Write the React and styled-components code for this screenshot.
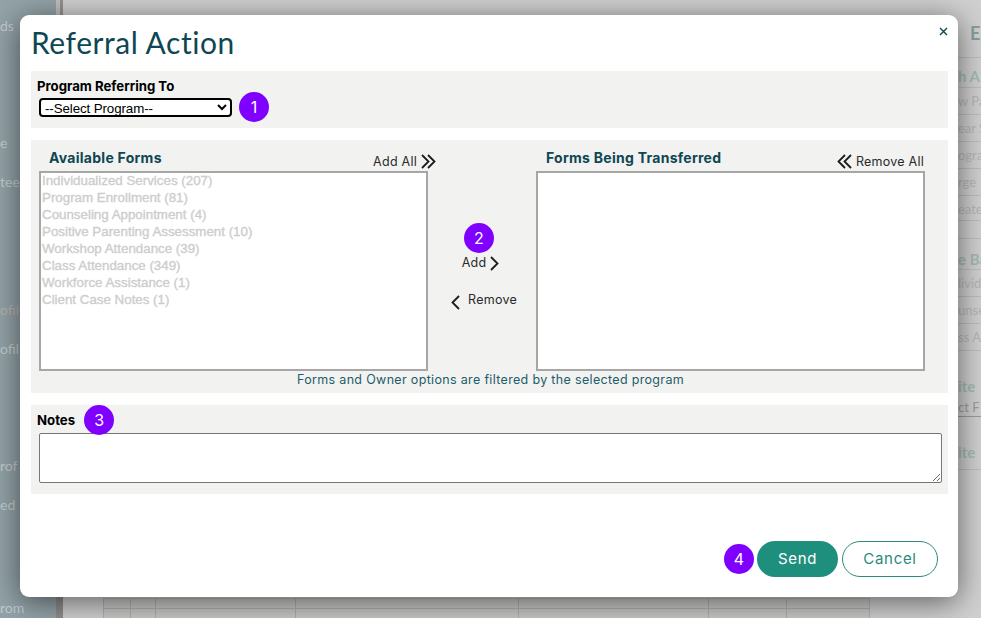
import React from "react";
import styled, { createGlobalStyle } from "styled-components";

const GlobalStyle = createGlobalStyle`
  html, body {
    margin: 0;
    padding: 0;
    height: 100%;
    overflow: hidden;
    background: #c8c8c8;
  }
  #root {
    height: 100%;
  }
`;

const Page = styled.div`
  position: relative;
  display: flex;
  width: 981px;
  height: 618px;
  overflow: hidden;
  background: #d0d0d0;
  font-family: Inter, "Liberation Sans", sans-serif;
`;

const Sidebar = styled.nav`
  width: 56px;
  height: 618px;
  flex-shrink: 0;
  overflow: hidden;
  background: #93a3a8;
`;

const SideItem = styled.div`
  margin-top: ${(p) => p.$top}px;
  height: 18px;
  font: 14px/18px Lato, sans-serif;
  color: ${(p) => p.$color || "#c4cdd0"};
  white-space: nowrap;
`;

const Rail = styled.div`
  width: 4px;
  height: 618px;
  flex-shrink: 0;
  background: linear-gradient(#c0c0c0 0 50%, #8e8e8e 50%);
`;

const RailEdge = styled.div`
  width: 3px;
  height: 618px;
  flex-shrink: 0;
  background: linear-gradient(#929292 0 50%, #8e8e8e 50%);
`;

const Main = styled.main`
  flex: 1;
  display: flex;
  flex-direction: column;
  justify-content: flex-end;
  min-width: 0;
`;

const BackTable = styled.div`
  margin: 0 88px 0 40px;
  height: 19px;
  display: grid;
  grid-template-columns: 27px 25px 140px 223px 190px 78px 1fr;
  grid-auto-rows: 10px;
  border-top: 1px solid #b4b4b4;
  border-right: 1px solid #b4b4b4;
  background: #c8cac7;
`;

const BackCell = styled.div`
  border-left: 1px solid #b0b0b0;
  border-bottom: 1px solid #b0b0b0;
`;

const BackColumn = styled.aside`
  width: 23px;
  flex-shrink: 0;
  overflow: hidden;
  display: flex;
  flex-direction: column;
`;

const BackHeading = styled.div`
  height: ${(p) => p.$height}px;
  flex-shrink: 0;
  font: 700 ${(p) => p.$size || 15}px/18px Lato, sans-serif;
  color: ${(p) => p.$color || "#a3bbb1"};
  padding: ${(p) => p.$pad || 0}px 0 0 ${(p) => p.$indent || 0}px;
  box-sizing: border-box;
  border-top: ${(p) => (p.$line ? "1px solid #bdbdbd" : "0")};
  border-bottom: ${(p) => (p.$under ? "1px solid #bdbdbd" : "0")};
  white-space: nowrap;
`;

const BackRow = styled.div`
  height: ${(p) => p.$height || 27}px;
  flex-shrink: 0;
  box-sizing: border-box;
  border-top: 1px solid #bdbdbd;
  font: 13px/26px Lato, sans-serif;
  color: #b6b6b6;
  white-space: nowrap;
`;

const BackField = styled.div`
  height: 19px;
  flex-shrink: 0;
  box-sizing: border-box;
  border-bottom: 1px solid #9a9a9a;
  font: 13px/18px Lato, sans-serif;
  color: #9c9c9c;
  white-space: nowrap;
`;

const Overlay = styled.div`
  position: absolute;
  inset: 0;
  padding: 15px 23px 21px 20px;
  box-sizing: border-box;
`;

const Modal = styled.section`
  position: relative;
  height: 582px;
  padding: 0 10px 0 11px;
  box-sizing: border-box;
  background: #fff;
  border-radius: 9px;
  box-shadow: 0 5px 30px rgba(0, 0, 0, 0.55);
`;

const Close = styled.button`
  position: absolute;
  top: 9px;
  right: 9px;
  width: 12px;
  height: 14px;
  padding: 0;
  border: 0;
  background: none;
  display: flex;
  align-items: center;
  justify-content: center;
`;

const Title = styled.h1`
  margin: 0;
  height: 56px;
  font: 400 30px/54px Lato, sans-serif;
  letter-spacing: 0.55px;
  color: #0f4653;
`;

const Panel = styled.div`
  background: #f2f2f1;
  margin-bottom: 12px;
`;

const ProgramPanel = styled(Panel)`
  height: 57px;
  padding: 8px 6px 0;
  box-sizing: border-box;
`;

const Label = styled.label`
  display: block;
  font: 700 13.2px/15px Inter, sans-serif;
  color: #000;
`;

const SelectRow = styled.div`
  display: flex;
  align-items: center;
  gap: 7px;
  margin: -2px 0 0 2px;
`;

const ProgramSelect = styled.select`
  width: 193px;
  height: 19px;
  padding: 0;
  box-sizing: border-box;
  border: 2px solid #000;
  border-radius: 4px;
  background: #fff;
  font: 13.33px "Liberation Sans", sans-serif;
  letter-spacing: -0.1px;
  color: #000;
`;

const Badge = styled.span`
  width: 30px;
  height: 30px;
  flex-shrink: 0;
  display: flex;
  align-items: center;
  justify-content: center;
  border-radius: 50%;
  background: #7f00ff;
  color: #fff;
  font: 400 16px/1 Inter, sans-serif;
`;

const MiddleBadge = styled(Badge)`
  margin-left: -6px;
`;

const FormsPanel = styled(Panel)`
  height: 253px;
  padding: 0 23px 0 8px;
  box-sizing: border-box;
`;

const Columns = styled.div`
  display: grid;
  grid-template-columns: 389px 108px 389px;
`;

const FormColumn = styled.div`
  min-width: 0;
`;

const FormHeader = styled.div`
  height: 31px;
  display: flex;
  justify-content: space-between;
  margin-right: ${(p) => p.$overhang || 0}px;
  padding-left: 10px;
`;

const FormTitle = styled.h2`
  margin: 10px 0 0;
  font: 700 14px/16px Inter, sans-serif;
  letter-spacing: 0.27px;
  color: #0f4653;
`;

const MoveLink = styled.button`
  display: flex;
  align-items: center;
  gap: ${(p) => p.$gap || 4}px;
  padding: 0;
  border: 0;
  background: none;
  font: 400 12.5px/16px Inter, sans-serif;
  letter-spacing: 0.25px;
  color: #2a2a2a;
`;

const AllLink = styled(MoveLink)`
  margin: 13px ${(p) => p.$inset || 0}px 0 0;
  height: 17px;
`;

const ListBox = styled.ul`
  height: 200px;
  margin: 0;
  padding: 0 0 0 1px;
  box-sizing: border-box;
  list-style: none;
  background: #fff;
  border: 2px solid #a6a6a6;
`;

const ListOption = styled.li`
  height: 17px;
  font: 400 13.33px/15px "Liberation Sans", sans-serif;
  color: #cdcdcd;
  -webkit-text-stroke: 0.35px #cdcdcd;
  white-space: nowrap;
`;

const MiddleColumn = styled.div`
  display: flex;
  flex-direction: column;
  align-items: center;
  padding-top: 83px;
`;

const AddLink = styled(MoveLink)`
  margin-top: 1px;
  height: 18px;
  margin-left: -3px;
`;

const RemoveLink = styled(MoveLink)`
  margin-top: 19px;
  margin-left: 4px;
  height: 18px;

  svg {
    margin-top: 5px;
  }
`;

const Hint = styled.p`
  margin: 0;
  padding: 1px 0 0 17px;
  text-align: center;
  font: 400 12.5px/16px Inter, sans-serif;
  letter-spacing: 0.33px;
  color: #1d5d69;
`;

const NotesPanel = styled(Panel)`
  height: 89px;
  margin-bottom: 0;
  padding: 0 6px;
  box-sizing: border-box;
`;

const NotesHead = styled.div`
  display: flex;
  align-items: center;
  gap: 9px;
  height: 29px;

  label {
    padding-top: 2px;
  }
`;

const Notes = styled.textarea`
  display: block;
  width: 903px;
  height: 50px;
  margin: -1px 0 0 2px;
  padding: 2px;
  box-sizing: border-box;
  background: #fff;
  border: 1px solid #767676;
  border-radius: 2px;
`;

const Actions = styled.div`
  display: flex;
  justify-content: flex-end;
  align-items: center;
  margin: 47px 10px 0 0;
  height: 36px;
`;

const Pill = styled.button`
  height: 36px;
  padding: 0 0 2px;
  box-sizing: border-box;
  border-radius: 18px;
  font: 400 15px/1 Inter, sans-serif;
  letter-spacing: 0.7px;
`;

const SendButton = styled(Pill)`
  width: 81px;
  margin: 0 4px 0 3px;
  border: 0;
  background: #1f8f7d;
  color: #fff;
`;

const CancelButton = styled(Pill)`
  width: 96px;
  border: 1px solid #2b8a7c;
  background: #fff;
  color: #2b8a7c;
`;

const Chevron = ({ left, double }) => (
  <svg width={double ? 15 : 9} height="15" viewBox={double ? "0 0 15 15" : "0 0 9 15"} fill="none" stroke="#1d1d1d" strokeWidth="1.8">
    {left ? (
      <>
        <polyline points="8,1 1.5,7.5 8,14" />
        {double && <polyline points="14,1 7.5,7.5 14,14" />}
      </>
    ) : (
      <>
        <polyline points="1,1 7.5,7.5 1,14" />
        {double && <polyline points="7,1 13.5,7.5 7,14" />}
      </>
    )}
  </svg>
);

const availableForms = [
  "Individualized Services (207)",
  "Program Enrollment (81)",
  "Counseling Appointment (4)",
  "Positive Parenting Assessment (10)",
  "Workshop Attendance (39)",
  "Class Attendance (349)",
  "Workforce Assistance (1)",
  "Client Case Notes (1)",
];

const sideItems = [
  { text: "ds", top: 17 },
  { text: "e", top: 99 },
  { text: "tee", top: 21 },
  { text: "ofil", top: 110, color: "#b9b4b0" },
  { text: "ofil", top: 21 },
  { text: "rof", top: 99 },
  { text: "ed", top: 21 },
  { text: "rom", top: 85 },
];

const App = () => {
  return (
    <Page>
      <GlobalStyle />
      <Sidebar>
        {sideItems.map((item, i) => (
          <SideItem key={i} $top={item.top} $color={item.color}>
            {item.text}
          </SideItem>
        ))}
      </Sidebar>
      <Rail />
      <RailEdge />
      <Main>
        <BackTable>
          {Array.from({ length: 14 }).map((_, i) => (
            <BackCell key={i} />
          ))}
        </BackTable>
      </Main>
      <BackColumn>
        <BackHeading $height={57} $size={18} $color="#8a9ca0" $pad={24} $indent={12}>
          E
        </BackHeading>
        <BackHeading $height={30} $pad={9} $line>h A</BackHeading>
        <BackRow>w Pa</BackRow>
        <BackRow>ear S</BackRow>
        <BackRow>ogra</BackRow>
        <BackRow>rge</BackRow>
        <BackRow $height={25}>eate</BackRow>
        <BackRow $height={18} />
        <BackHeading $height={31} $pad={11} $line>e Ba</BackHeading>
        <BackRow>livid</BackRow>
        <BackRow>unse</BackRow>
        <BackRow>ss A</BackRow>
        <BackHeading $height={48} $pad={26} $line>ite</BackHeading>
        <BackField>ct F</BackField>
        <BackHeading $height={53} $pad={26} $under>ite</BackHeading>
      </BackColumn>

      <Overlay>
        <Modal>
          <Close aria-label="Close">
            <svg width="9" height="9" viewBox="0 0 9 9" stroke="#0f4653" strokeWidth="1.4">
              <path d="M1 1 8 8M8 1 1 8" />
            </svg>
          </Close>
          <Title>Referral Action</Title>

          <ProgramPanel>
            <Label htmlFor="program">Program Referring To</Label>
            <SelectRow>
              <ProgramSelect id="program" defaultValue="">
                <option value="">--Select Program--</option>
              </ProgramSelect>
              <Badge>1</Badge>
            </SelectRow>
          </ProgramPanel>

          <FormsPanel>
            <Columns>
              <FormColumn>
                <FormHeader $overhang={-8}>
                  <FormTitle>Available Forms</FormTitle>
                  <AllLink>
                    Add All <Chevron double />
                  </AllLink>
                </FormHeader>
                <ListBox>
                  {availableForms.map((form) => (
                    <ListOption key={form}>{form}</ListOption>
                  ))}
                </ListBox>
              </FormColumn>
              <MiddleColumn>
                <MiddleBadge>2</MiddleBadge>
                <AddLink>
                  Add <Chevron />
                </AddLink>
                <RemoveLink $gap={8}>
                  <Chevron left /> Remove
                </RemoveLink>
              </MiddleColumn>
              <FormColumn>
                <FormHeader>
                  <FormTitle>Forms Being Transferred</FormTitle>
                  <AllLink $inset={1}>
                    <Chevron left double /> Remove All
                  </AllLink>
                </FormHeader>
                <ListBox />
              </FormColumn>
            </Columns>
            <Hint>Forms and Owner options are filtered by the selected program</Hint>
          </FormsPanel>

          <NotesPanel>
            <NotesHead>
              <Label htmlFor="notes">Notes</Label>
              <Badge>3</Badge>
            </NotesHead>
            <Notes id="notes" />
          </NotesPanel>

          <Actions>
            <Badge>4</Badge>
            <SendButton>Send</SendButton>
            <CancelButton>Cancel</CancelButton>
          </Actions>
        </Modal>
      </Overlay>
    </Page>
  );
};

export default App;
